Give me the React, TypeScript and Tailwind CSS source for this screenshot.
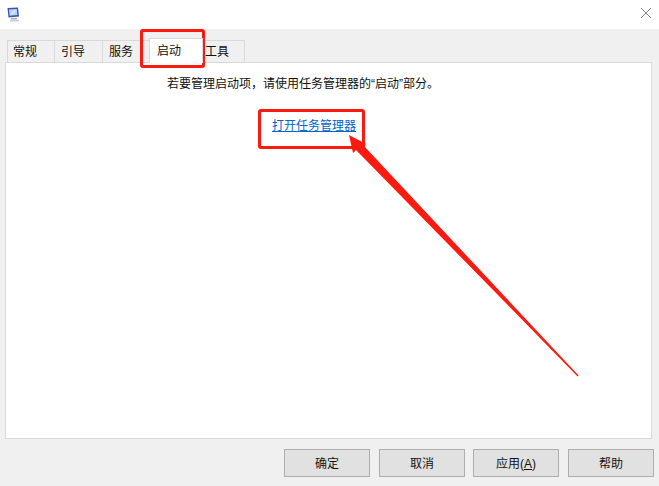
const font = { fontFamily: '"Liberation Sans", "Noto Sans CJK SC", sans-serif' };

function Tab({ label, active, w, pl }: { label: string; active?: boolean; w: string; pl: string }) {
  return (
    <div
      className={
        active
          ? `${w} ${pl} relative z-10 -mb-px -mx-px h-[25px] bg-white border border-[#d9d9d9] border-b-0 pt-[2px] text-[12px] leading-[20px] text-[#111]`
          : `${w} ${pl} h-[22px] bg-[#f0f0f0] border border-[#d9d9d9] border-b-0 -ml-px first:ml-0 pt-[1px] text-[12px] leading-[20px] text-[#111]`
      }
    >
      {label}
    </div>
  );
}

function Btn({ children, cls }: { children: React.ReactNode; cls?: string }) {
  return (
    <button className={`${cls ?? ""} w-[86px] h-[28px] bg-[#e1e1e1] border border-[#adadad] pt-[2px] text-[12px] leading-[24px] text-[#111] text-center`}>
      {children}
    </button>
  );
}

export default function App() {
  return (
    <div className="relative w-[659px] h-[486px] bg-[#f0f0f0] overflow-hidden" style={font}>
      <div className="h-[29px] bg-white flex items-center justify-between pl-[7px] pr-[7px]">
        <svg width="13" height="15" viewBox="0 0 13 15" className="-mt-[1px]">
          <path d="M0.5 1 L11 0.5 L12 9.5 L1.5 10.5 Z" fill="#3a52b0" />
          <path d="M2 2.5 L9.8 2 L10.4 8 L2.6 8.8 Z" fill="#b9d5f3" />
          <path d="M4.5 7.5 L8 3.5" stroke="#fff" strokeWidth="1" />
          <rect x="4" y="11" width="6" height="1.5" fill="#a7abb2" />
          <rect x="3" y="12.5" width="9" height="2" fill="#cdd0d5" />
        </svg>
        <svg width="12" height="12" viewBox="0 0 12 12" className="-mt-[3px]">
          <path d="M1 1 L11 11 M11 1 L1 11" stroke="#8a8a8a" strokeWidth="1" />
        </svg>
      </div>

      <div className="pl-[7px] pt-[11px] flex items-end h-[33px]">
        <Tab label="常规" w="w-[48px]" pl="pl-[5px]" />
        <Tab label="引导" w="w-[49px]" pl="pl-[6px]" />
        <Tab label="服务" w="w-[48px]" pl="pl-[6px]" />
        <Tab label="启动" active w="w-[54px]" pl="pl-[7px]" />
        <Tab label="工具" w="w-[44px]" pl="pl-[3px]" />
      </div>

      <div className="ml-[5px] w-[647px] h-[377px] bg-white border border-[#d9d9d9] flex flex-col items-start">
        <div className="mt-[12px] ml-[161px] text-[12px] leading-[18px] text-[#111]">
          若要管理启动项，请使用任务管理器的“启动”部分。
        </div>
        <a className="mt-[24px] ml-[266px] text-[12px] leading-[18px] text-[#0066cc] underline">打开任务管理器</a>
      </div>

      <div className="flex pl-[284px] gap-[9px] mt-[10px]">
        <Btn>确定</Btn>
        <Btn>取消</Btn>
        <Btn cls="-ml-px">应用(<span className="underline">A</span>)</Btn>
        <Btn>帮助</Btn>
      </div>

      <div className="absolute left-[140px] top-[29px] w-[65px] h-[39px] border-[3px] border-[#fb1a10] rounded-[3px]" />
      <div className="absolute left-[258px] top-[109px] w-[107px] h-[40px] border-[3px] border-[#fb1a10] rounded-[3px]" />
      <svg className="absolute left-0 top-0" width="659" height="486" viewBox="0 0 659 486">
        <polygon points="349,135 366,144 364,146 578.6,375.4 577.6,376.4 356,150 353,153" fill="#fb1a10" />
      </svg>
    </div>
  );
}
